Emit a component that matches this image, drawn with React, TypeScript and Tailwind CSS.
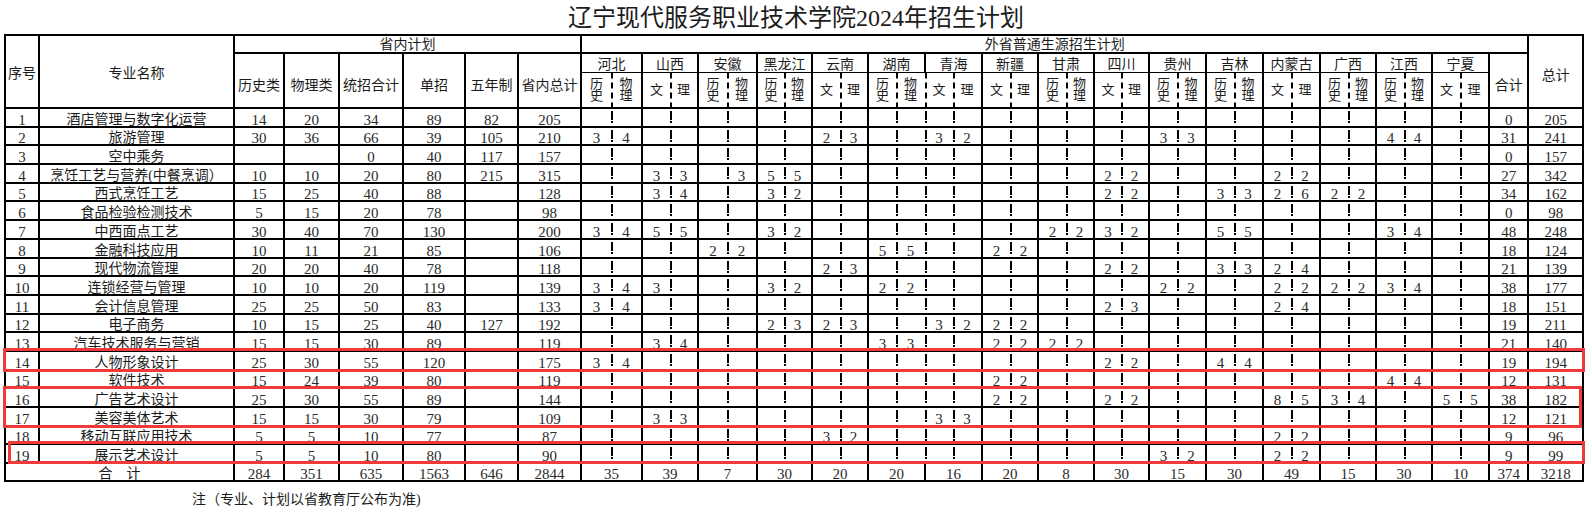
import React from 'react'

type Kind = 'hw' | 'wl'
type Province = { name: string; w: number; kind: Kind; joinLeft?: boolean }
type Pair = [number | null, number | null]
type Row = {
  no: number
  name: string
  local: (number | null)[]
  prov: Record<string, Pair>
  sum: number
  total: number
}

const provinces: Province[] = [
  { name: '河北', w: 61, kind: 'hw' },
  { name: '山西', w: 56, kind: 'wl' },
  { name: '安徽', w: 59, kind: 'hw' },
  { name: '黑龙江', w: 55, kind: 'hw' },
  { name: '云南', w: 56, kind: 'wl' },
  { name: '湖南', w: 57, kind: 'hw' },
  { name: '青海', w: 57, kind: 'wl', joinLeft: true },
  { name: '新疆', w: 56, kind: 'wl' },
  { name: '甘肃', w: 56, kind: 'hw' },
  { name: '四川', w: 55, kind: 'wl' },
  { name: '贵州', w: 57, kind: 'hw' },
  { name: '吉林', w: 57, kind: 'hw' },
  { name: '内蒙古', w: 57, kind: 'wl' },
  { name: '广西', w: 56, kind: 'hw' },
  { name: '江西', w: 56, kind: 'hw' },
  { name: '宁夏', w: 57, kind: 'wl' },
]

const rows: Row[] = [
  { no: 1, name: '酒店管理与数字化运营', local: [14, 20, 34, 89, 82, 205], prov: {}, sum: 0, total: 205 },
  { no: 2, name: '旅游管理', local: [30, 36, 66, 39, 105, 210], prov: { 河北: [3, 4], 云南: [2, 3], 青海: [3, 2], 贵州: [3, 3], 江西: [4, 4] }, sum: 31, total: 241 },
  { no: 3, name: '空中乘务', local: [null, null, 0, 40, 117, 157], prov: {}, sum: 0, total: 157 },
  { no: 4, name: '烹饪工艺与营养(中餐烹调）', local: [10, 10, 20, 80, 215, 315], prov: { 山西: [3, 3], 安徽: [null, 3], 黑龙江: [5, 5], 四川: [2, 2], 内蒙古: [2, 2] }, sum: 27, total: 342 },
  { no: 5, name: '西式烹饪工艺', local: [15, 25, 40, 88, null, 128], prov: { 山西: [3, 4], 黑龙江: [3, 2], 四川: [2, 2], 吉林: [3, 3], 内蒙古: [2, 6], 广西: [2, 2] }, sum: 34, total: 162 },
  { no: 6, name: '食品检验检测技术', local: [5, 15, 20, 78, null, 98], prov: {}, sum: 0, total: 98 },
  { no: 7, name: '中西面点工艺', local: [30, 40, 70, 130, null, 200], prov: { 河北: [3, 4], 山西: [5, 5], 黑龙江: [3, 2], 甘肃: [2, 2], 四川: [3, 2], 吉林: [5, 5], 江西: [3, 4] }, sum: 48, total: 248 },
  { no: 8, name: '金融科技应用', local: [10, 11, 21, 85, null, 106], prov: { 安徽: [2, 2], 湖南: [5, 5], 新疆: [2, 2] }, sum: 18, total: 124 },
  { no: 9, name: '现代物流管理', local: [20, 20, 40, 78, null, 118], prov: { 云南: [2, 3], 四川: [2, 2], 吉林: [3, 3], 内蒙古: [2, 4] }, sum: 21, total: 139 },
  { no: 10, name: '连锁经营与管理', local: [10, 10, 20, 119, null, 139], prov: { 河北: [3, 4], 山西: [3, null], 黑龙江: [3, 2], 湖南: [2, 2], 贵州: [2, 2], 内蒙古: [2, 2], 广西: [2, 2], 江西: [3, 4] }, sum: 38, total: 177 },
  { no: 11, name: '会计信息管理', local: [25, 25, 50, 83, null, 133], prov: { 河北: [3, 4], 四川: [2, 3], 内蒙古: [2, 4] }, sum: 18, total: 151 },
  { no: 12, name: '电子商务', local: [10, 15, 25, 40, 127, 192], prov: { 黑龙江: [2, 3], 云南: [2, 3], 青海: [3, 2], 新疆: [2, 2] }, sum: 19, total: 211 },
  { no: 13, name: '汽车技术服务与营销', local: [15, 15, 30, 89, null, 119], prov: { 山西: [3, 4], 湖南: [3, 3], 新疆: [2, 2], 甘肃: [2, 2] }, sum: 21, total: 140 },
  { no: 14, name: '人物形象设计', local: [25, 30, 55, 120, null, 175], prov: { 河北: [3, 4], 四川: [2, 2], 吉林: [4, 4] }, sum: 19, total: 194 },
  { no: 15, name: '软件技术', local: [15, 24, 39, 80, null, 119], prov: { 新疆: [2, 2], 江西: [4, 4] }, sum: 12, total: 131 },
  { no: 16, name: '广告艺术设计', local: [25, 30, 55, 89, null, 144], prov: { 新疆: [2, 2], 四川: [2, 2], 内蒙古: [8, 5], 广西: [3, 4], 宁夏: [5, 5] }, sum: 38, total: 182 },
  { no: 17, name: '美容美体艺术', local: [15, 15, 30, 79, null, 109], prov: { 山西: [3, 3], 青海: [3, 3] }, sum: 12, total: 121 },
  { no: 18, name: '移动互联应用技术', local: [5, 5, 10, 77, null, 87], prov: { 云南: [3, 2], 内蒙古: [2, 2] }, sum: 9, total: 96 },
  { no: 19, name: '展示艺术设计', local: [5, 5, 10, 80, null, 90], prov: { 贵州: [3, 2], 内蒙古: [2, 2] }, sum: 9, total: 99 },
]

const localTotals = [284, 351, 635, 1563, 646, 2844]
const provTotals = [35, 39, 7, 30, 20, 20, 16, 20, 8, 30, 15, 30, 49, 15, 30, 10]

const localHeads = ['历史类', '物理类', '统招合计', '单招', '五年制', '省内总计']
const localWidths = [50, 55, 64, 62, 53, 63]

const widths = [
  34,
  195,
  ...localWidths,
  ...provinces.flatMap((p) => [Math.floor(p.w / 2), p.w - Math.floor(p.w / 2)]),
  39,
  55,
]

// dashed divider between the two halves of a province
const bodyDash =
  'bg-[linear-gradient(#000,#000),linear-gradient(#000,#000)] bg-[length:2px_9px,2px_2px] bg-[position:0_2px,0_12px] bg-no-repeat'
const headDash = 'bg-[linear-gradient(#000_65%,transparent_65%)] bg-[length:2px_10px] bg-repeat-y'

const cell = 'border-2 border-black text-center p-0'
const numCell = `${cell} align-bottom text-[15px] leading-[12px] text-[#2a2a2a]`

function subLabels(kind: Kind) {
  if (kind === 'hw') {
    return [
      <>
        历<br />史
      </>,
      <>
        物<br />理
      </>,
    ]
  }
  return [<>文</>, <>理</>]
}

export default function App() {
  return (
    <div className="relative w-[1592px] h-[513px] overflow-hidden bg-white text-[#1c1c1c] font-['Liberation_Serif','Noto_Sans_CJK_SC',serif]">
      {/* Title */}
      <div className="h-[34px] flex items-center justify-center text-[24px] leading-none pt-[1px]">
        辽宁现代服务职业技术学院2024年招生计划
      </div>

      <table className="ml-[4px] w-[1580px] table-fixed border-collapse">
        <colgroup>
          {widths.map((w, i) => (
            <col key={i} style={{ width: w }} />
          ))}
        </colgroup>
        <thead>
          <tr className="h-[18px]">
            <th rowSpan={3} className={`${cell} font-normal text-[14px] align-middle pt-[4px]`}>
              序号
            </th>
            <th rowSpan={3} className={`${cell} font-normal text-[14px] align-middle pt-[4px]`}>
              专业名称
            </th>
            <th colSpan={6} className={`${cell} font-normal text-[14px] leading-[14px] align-bottom`}>
              省内计划
            </th>
            <th colSpan={33} className={`${cell} font-normal text-[14px] leading-[14px] align-bottom`}>
              外省普通生源招生计划
            </th>
            <th rowSpan={3} className={`${cell} font-normal text-[14px] align-middle pt-[8px]`}>
              总计
            </th>
          </tr>
          <tr className="h-[19px]">
            {localHeads.map((h) => (
              <th key={h} rowSpan={2} className={`${cell} font-normal text-[14px] align-middle pt-[9px] whitespace-nowrap`}>
                {h}
              </th>
            ))}
            {provinces.map((p) => (
              <th
                key={p.name}
                colSpan={2}
                className={`${cell} border-b-[1px] font-normal text-[14px] leading-[14px] align-bottom whitespace-nowrap`}
              >
                {p.name}
              </th>
            ))}
            <th rowSpan={2} className={`${cell} font-normal text-[14px] align-middle pt-[10px]`}>
              合计
            </th>
          </tr>
          <tr className="h-[36px]">
            {provinces.map((p, i) => {
              const [a, b] = subLabels(p.kind)
              const nextJoin = provinces[i + 1]?.joinLeft
              return (
                <React.Fragment key={p.name}>
                  <th
                    className={`${cell} border-t-[1px] border-r-0 ${p.joinLeft ? `border-l-0 ${headDash}` : ''} font-normal text-[13px] leading-[12px] align-middle`}
                  >
                    {a}
                  </th>
                  <th
                    className={`${cell} border-t-[1px] border-l-0 ${nextJoin ? 'border-r-0' : ''} ${headDash} font-normal text-[13px] leading-[12px] align-middle`}
                  >
                    {b}
                  </th>
                </React.Fragment>
              )
            })}
          </tr>
        </thead>
        <tbody>
          {rows.map((r) => (
            <tr key={r.no} className="h-[18.7px]">
              <td className={numCell}>{r.no}</td>
              <td className={`${cell} align-bottom text-[14px] leading-[12px] whitespace-nowrap`}>{r.name}</td>
              {r.local.map((v, i) => (
                <td key={i} className={numCell}>
                  {v ?? ''}
                </td>
              ))}
              {provinces.map((p, i) => {
                const v = r.prov[p.name]
                const nextJoin = provinces[i + 1]?.joinLeft
                return (
                  <React.Fragment key={p.name}>
                    <td className={`${numCell} border-r-0 ${p.joinLeft ? `border-l-0 ${bodyDash}` : ''}`}>
                      {v?.[0] ?? ''}
                    </td>
                    <td className={`${numCell} border-l-0 ${nextJoin ? 'border-r-0' : ''} ${bodyDash}`}>
                      {v?.[1] ?? ''}
                    </td>
                  </React.Fragment>
                )
              })}
              <td className={numCell}>{r.sum}</td>
              <td className={numCell}>{r.total}</td>
            </tr>
          ))}
          <tr className="h-[18px]">
            <td colSpan={2} className={`${cell} align-bottom text-[14px] leading-[12px]`}>
              合　计
            </td>
            {localTotals.map((v, i) => (
              <td key={i} className={numCell}>
                {v}
              </td>
            ))}
            {provTotals.map((v, i) => (
              <td key={i} colSpan={2} className={numCell}>
                {v}
              </td>
            ))}
            <td className={numCell}>374</td>
            <td className={numCell}>3218</td>
          </tr>
        </tbody>
      </table>

      <p className="pl-[192px] pt-[11px] text-[14px] leading-[14px]">注（专业、计划以省教育厅公布为准)</p>

      {/* red highlight boxes */}
      <div className="pointer-events-none absolute left-[3px] top-[348px] w-[1582px] h-[24px] border-[3px] border-[#f03a3a]" />
      <div className="pointer-events-none absolute left-[3px] top-[386px] w-[1579px] h-[42px] border-[3px] border-[#f03a3a]" />
      <div className="pointer-events-none absolute left-[8px] top-[441px] w-[1577px] h-[23px] border-[3px] border-[#f03a3a]" />
    </div>
  )
}
